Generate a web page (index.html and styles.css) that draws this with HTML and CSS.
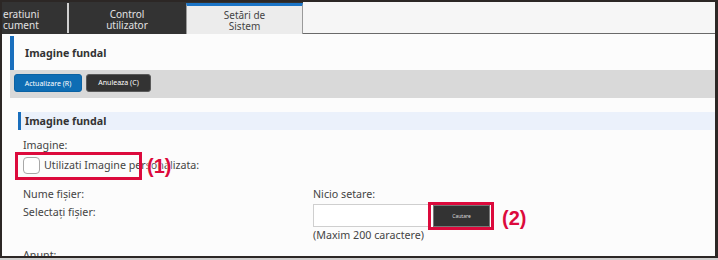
FILE: index.html
```html
<!DOCTYPE html>
<html lang="ro">
<head>
<meta charset="utf-8">
<link rel="stylesheet" href="styles.css">
</head>
<body>
<div class="frame">
  <div class="tabs">
    <div class="tab tab-cut">eratiuni<br>cument</div>
    <div class="tab tab-dark">Control<br>utilizator</div>
    <div class="tab tab-active">Setări de<br>Sistem</div>
    <div class="tab-rest"></div>
  </div>
  <div class="page">
    <div class="title">Imagine fundal</div>
    <div class="toolbar">
      <button class="btn btn-blue">Actualizare (R)</button>
      <button class="btn btn-dark">Anuleaza (C)</button>
    </div>
    <div class="form">
      <div class="sec">Imagine fundal</div>
      <div class="fields">
        <div class="lbl first">Imagine:</div>
        <div class="chk-row">
          <span class="chk"></span>
          <span class="chk-text">Utilizati Imagine personalizata:</span>
          <span class="hl hl1"></span>
          <span class="mark mark1">(1)</span>
        </div>
        <div class="grid">
          <div class="lbl">Nume fişier:</div>
          <div class="lbl">Nicio setare:</div>
          <div class="lbl">Selectaţi fişier:</div>
          <div class="val">
            <div class="file-row">
              <span class="input"></span>
              <span class="btn-wrap">
                <button class="btn-search">Cautare</button>
                <span class="hl hl2"></span>
              </span>
              <span class="mark mark2">(2)</span>
            </div>
            <div class="lbl">(Maxim 200 caractere)</div>
          </div>
          <div class="lbl last">Anunt:</div>
        </div>
      </div>
    </div>
  </div>
</div>
</body>
</html>
```
FILE: styles.css
```css
html, body {
  margin: 0;
  padding: 0;
  background: #cfcfcf;
}
body {
  width: 718px;
  height: 260px;
  overflow: hidden;
  font-family: "Noto Sans", "Open Sans", sans-serif;
}
.frame {
  box-sizing: border-box;
  width: 718px;
  height: 258px;
  border-top: 2px solid #2c2725;
  border-left: 2px solid #2c2725;
  border-right: 3px solid #2c2725;
  border-bottom: 2px solid #2c2725;
  background: #fcfcfc;
  overflow: hidden;
}
.tabs {
  display: flex;
  height: 32px;
  background: #333;
}
.tab {
  box-sizing: border-box;
  height: 31px;
  font-size: 10px;
  line-height: 11px;
  padding-top: 6px;
  text-align: center;
}
.tab-cut {
  width: 67px;
  color: #e2e2e2;
  text-align: left;
  padding-left: 1px;
  border-right: 2px solid #d0d0d0;
  margin-top: 1px;
  height: 30px;
}
.tab-dark {
  width: 116px;
  color: #e2e2e2;
  margin-top: 1px;
  height: 30px;
}
.tab-active {
  width: 117px;
  margin-left: 1px;
  margin-top: 1px;
  height: 31px;
  background: #ececec;
  color: #444;
  border-left: 1px solid #9a9a9a;
  border-right: 1px solid #9a9a9a;
  border-top: 3px solid #1b74c6;
  padding-top: 4px;
}
.tab-rest {
  flex: 1;
  height: 31px;
  background: #f6f6f6;
  border-bottom: 1px solid #6a6a6a;
}
.page {
  padding: 2px 0 0 8px;
}
.title {
  box-sizing: border-box;
  height: 34px;
  border-left: 4px solid #1a6fbd;
  padding-left: 11px;
  font-weight: bold;
  font-size: 10.7px;
  line-height: 34px;
  color: #333;
}
.toolbar {
  display: flex;
  gap: 4px;
  height: 28px;
  box-sizing: border-box;
  padding: 4px 4px;
  background: #d9d9d9;
}
.btn {
  box-sizing: border-box;
  height: 18px;
  border-radius: 3px;
  font-family: "Noto Sans", sans-serif;
  font-size: 7px;
  color: #fff;
  padding: 0;
  cursor: pointer;
}
.btn-blue {
  width: 68px;
  background: #0e6db4;
  border: 1px solid #0b62a3;
}
.btn-dark {
  width: 65px;
  background: #333;
  border: 1px solid #5a5a5a;
  padding-bottom: 1px;
}
.form {
  margin: 14px 0 0 8px;
}
.sec {
  box-sizing: border-box;
  height: 18px;
  background: #ebf1fb;
  border-left: 3px solid #1a6fbd;
  padding-left: 4px;
  font-weight: bold;
  font-size: 10.7px;
  line-height: 18px;
  color: #333;
}
.fields {
  padding-left: 5px;
  color: #444;
  font-size: 10.7px;
}
.lbl {
  line-height: 16px;
  height: 16px;
  white-space: nowrap;
}
.first {
  margin-top: 7px;
}
.chk-row {
  position: relative;
  display: flex;
  align-items: center;
  gap: 4px;
  height: 24px;
}
.chk {
  box-sizing: border-box;
  width: 17px;
  height: 17px;
  border: 1px solid #a8a8a8;
  border-radius: 4px;
  background: #fff;
}
.chk-text {
  line-height: 16px;
}
.hl {
  position: absolute;
  box-sizing: border-box;
  border: 3px solid #dc0a3c;
}
.hl1 {
  left: -8px;
  top: -1px;
  width: 127px;
  height: 28px;
}
.mark {
  font-family: "Liberation Sans", Arial, sans-serif;
  font-weight: bold;
  font-size: 20px;
  color: #dc0a3c;
  line-height: 22px;
}
.mark1 {
  position: absolute;
  left: 124px;
  top: 2px;
  text-shadow: 0 0 2px #fff, 0 0 2px #fff;
}
.grid {
  display: grid;
  grid-template-columns: 290px 1fr;
  row-gap: 2px;
  margin-top: 9px;
}
.file-row {
  display: flex;
  align-items: center;
  height: 23px;
}
.input {
  box-sizing: border-box;
  width: 117px;
  height: 23px;
  border: 1px solid #cfcfcf;
  background: #fff;
}
.btn-wrap {
  position: relative;
  margin-left: 3px;
  height: 22px;
  display: flex;
}
.btn-search {
  box-sizing: border-box;
  width: 57px;
  height: 22px;
  padding: 0;
  background: #333;
  border: 1px solid #777;
  color: #ddd;
  font-family: "Noto Sans", sans-serif;
  font-size: 5px;
}
.hl2 {
  left: -5px;
  top: -3px;
  right: -4px;
  bottom: -3px;
}
.mark2 {
  margin-left: 12px;
  margin-top: 4px;
}
.last {
  margin-top: 2px;
}
```
